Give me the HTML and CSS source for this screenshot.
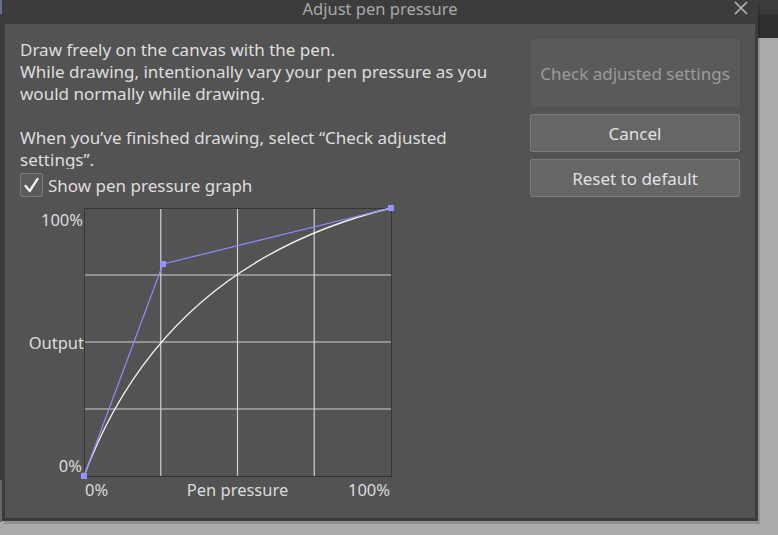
FILE: index.html
```html
<!DOCTYPE html>
<html>
<head>
<meta charset="utf-8">
<link rel="stylesheet" href="styles.css">
</head>
<body>
<div class="desktop">
  <div class="edge-left"></div>
  <div class="edge-right"></div>
  <div class="dialog">
    <div class="titlebar">
      <span class="title">Adjust pen pressure</span>
      <svg class="close" width="14" height="14" viewBox="0 0 14 14"><path d="M1 1 L13 13 M13 1 L1 13" stroke="#b8b8b8" stroke-width="1.6" fill="none"/></svg>
    </div>
    <div class="body">
      <div class="left">
        <div class="intro">
          <p>Draw freely on the canvas with the pen.<br>While drawing, intentionally vary your pen pressure as you would normally while drawing.</p>
          <p>When you’ve finished drawing, select “Check adjusted settings”.</p>
        </div>
        <label class="check-row">
          <span class="checkbox"><svg width="23" height="23" viewBox="0 0 23 23"><path d="M5 12 L9.5 17.5 L18 4.5" stroke="#f2f2f2" stroke-width="2.6" fill="none" stroke-linecap="round" stroke-linejoin="round"/></svg></span>
          <span>Show pen pressure graph</span>
        </label>
        <svg class="graph" width="400" height="304" viewBox="0 0 400 304">
          <g stroke="#cfcfcf" stroke-width="1.2">
            <line x1="140.75" y1="8" x2="140.75" y2="276"/>
            <line x1="217.5" y1="8" x2="217.5" y2="276"/>
            <line x1="294.25" y1="8" x2="294.25" y2="276"/>
            <line x1="64" y1="75" x2="371" y2="75"/>
            <line x1="64" y1="142" x2="371" y2="142"/>
            <line x1="64" y1="209" x2="371" y2="209"/>
          </g>
          <rect x="64.5" y="8.5" width="307" height="268" fill="none" stroke="#353535" stroke-width="1"/>
          <path d="M64 276 Q143 64 371 8" fill="none" stroke="#f4f4f4" stroke-width="1.3"/>
          <polyline points="64,276 143,64 371,8" fill="none" stroke="#8c8cff" stroke-width="1.2"/>
          <g fill="#9494ff">
            <rect x="61" y="273" width="6" height="6"/>
            <rect x="140" y="61" width="6" height="6"/>
            <rect x="368" y="5" width="6" height="6"/>
          </g>
          <g class="lbl">
            <text x="63" y="26" text-anchor="end">100%</text>
            <text x="64" y="149" text-anchor="end">Output</text>
            <text x="62" y="272" text-anchor="end">0%</text>
            <text x="65" y="296">0%</text>
            <text x="217.5" y="296" text-anchor="middle">Pen pressure</text>
            <text x="370" y="296" text-anchor="end">100%</text>
          </g>
        </svg>
      </div>
      <div class="right">
        <button class="btn disabled">Check adjusted settings</button>
        <button class="btn">Cancel</button>
        <button class="btn">Reset to default</button>
      </div>
    </div>
  </div>
</div>
</body>
</html>
```
FILE: styles.css
```css
html, body {
  margin: 0;
  padding: 0;
  background: #aaaaaa;
  width: 778px;
  height: 535px;
  overflow: hidden;
  font-family: "Noto Sans", "Liberation Sans", Arial, sans-serif;
}
.desktop {
  position: relative;
  width: 778px;
  height: 535px;
}
.edge-left {
  position: absolute;
  left: 0;
  top: 0;
  width: 2px;
  height: 522px;
  background: linear-gradient(#65728a 0, #65728a 14px, #3a3a3a 14px, #3a3a3a 480px, #6a6a6a 480px);
}
.edge-right {
  position: absolute;
  left: 758px;
  top: 0;
  width: 20px;
  height: 38px;
  background: linear-gradient(#3b3b3b 0, #3b3b3b 14px, #2f2f2f 14px);
}
.dialog {
  position: absolute;
  left: 2px;
  top: 0;
  width: 756px;
  height: 521px;
  background: #3c3c3c;
  box-shadow: 2px 3px 0 rgba(0, 0, 0, 0.15);
  display: flex;
  flex-direction: column;
}
.titlebar {
  height: 24px;
  position: relative;
  display: flex;
  justify-content: center;
  align-items: flex-start;
}
.title {
  color: #a9a9a9;
  font-size: 16.5px;
  line-height: 18px;
}
.close {
  position: absolute;
  right: 10px;
  top: 1px;
}
.body {
  flex: 1;
  margin: 0 3px 3px 3px;
  background: #535353;
  display: flex;
  padding: 15px 15px 0 15px;
  color: #dedede;
}
.left {
  width: 510px;
  display: flex;
  flex-direction: column;
}
.intro {
  height: 130px;
  overflow: hidden;
  font-size: 17px;
  line-height: 22px;
  width: 500px;
}
.intro p {
  margin: 0 0 22px 0;
}
.check-row {
  display: flex;
  align-items: center;
  gap: 5px;
  height: 24px;
  font-size: 17px;
  margin-top: 4px;
}
.checkbox {
  width: 21px;
  height: 22px;
  border: 1px solid #7c7c7c;
  border-radius: 2px;
  background: #5b5b5b;
  display: flex;
  align-items: center;
  justify-content: center;
}
.checkbox svg {
  width: 21px;
  height: 21px;
}
.graph {
  display: block;
  margin-top: 3px;
}
.lbl text {
  font-family: "Noto Sans", "Liberation Sans", Arial, sans-serif;
  font-size: 16.5px;
  fill: #dcdcdc;
}
.right {
  width: 210px;
  margin-left: auto;
  display: flex;
  flex-direction: column;
  gap: 7px;
}
.btn {
  height: 38px;
  background: #666666;
  border: 1px solid #7d7d7d;
  border-radius: 2px;
  color: #e2e2e2;
  font-family: "Noto Sans", "Liberation Sans", Arial, sans-serif;
  font-size: 17px;
  padding: 0;
}
.btn.disabled {
  height: 68px;
  background: #5a5a5a;
  border-color: #5a5a5a;
  color: #9b9b9b;
}
```
